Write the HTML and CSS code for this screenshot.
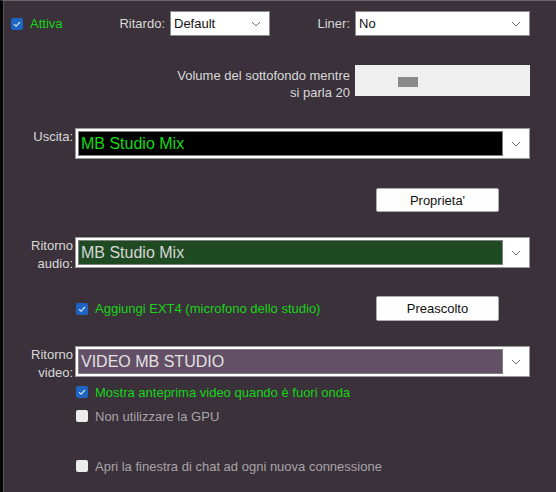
FILE: index.html
```html
<!DOCTYPE html>
<html lang="it">
<head>
    <meta charset="UTF-8">
    <title>Impostazioni uscita</title>
    <link rel="stylesheet" href="styles.css">
</head>
<body>
    <div class="panel">

        <!-- Attiva / Ritardo / Liner -->
        <div class="row row-top">
            <label class="check-cell attiva">
                <span class="box checked"><svg viewBox="0 0 12 12"><path d="M3 6.2 L5.1 8.2 L9 4"/></svg></span>
                <span class="green">Attiva</span>
            </label>
            <span class="lbl lbl-ritardo">Ritardo:</span>
            <div class="drop drop-ritardo">
                <span>Default</span>
                <svg class="chev" viewBox="0 0 10 6"><path d="M1 1 L5 5 L9 1"/></svg>
            </div>
            <span class="lbl lbl-liner">Liner:</span>
            <div class="drop drop-liner">
                <span>No</span>
                <svg class="chev" viewBox="0 0 10 6"><path d="M1 1 L5 5 L9 1"/></svg>
            </div>
        </div>

        <!-- Volume sottofondo -->
        <div class="row row-volume">
            <span class="lbl lbl-volume">Volume del sottofondo mentre<br>si parla 20</span>
            <div class="track"><span class="thumb"></span></div>
        </div>

        <!-- Uscita -->
        <div class="row row-combo row-uscita">
            <span class="lbl side">Uscita:</span>
            <div class="combo">
                <div class="field field-black">MB Studio Mix</div>
                <svg class="chev" viewBox="0 0 10 6"><path d="M1 1 L5 5 L9 1"/></svg>
            </div>
        </div>

        <div class="row row-btn row-prop">
            <button class="btn">Proprieta'</button>
        </div>

        <!-- Ritorno audio -->
        <div class="row row-combo row-audio">
            <span class="lbl side">Ritorno<br>audio:</span>
            <div class="combo">
                <div class="field field-green">MB Studio Mix</div>
                <svg class="chev" viewBox="0 0 10 6"><path d="M1 1 L5 5 L9 1"/></svg>
            </div>
        </div>

        <div class="row row-ext">
            <label class="check-cell indent ext">
                <span class="box checked"><svg viewBox="0 0 12 12"><path d="M3 6.2 L5.1 8.2 L9 4"/></svg></span>
                <span class="green">Aggiungi EXT4 (microfono dello studio)</span>
            </label>
            <button class="btn">Preascolto</button>
        </div>

        <!-- Ritorno video -->
        <div class="row row-combo row-video">
            <span class="lbl side">Ritorno<br>video:</span>
            <div class="combo">
                <div class="field field-purple">VIDEO MB STUDIO</div>
                <svg class="chev" viewBox="0 0 10 6"><path d="M1 1 L5 5 L9 1"/></svg>
            </div>
        </div>

        <label class="row check-cell indent opt opt-preview">
            <span class="box checked"><svg viewBox="0 0 12 12"><path d="M3 6.2 L5.1 8.2 L9 4"/></svg></span>
            <span class="green">Mostra anteprima video quando è fuori onda</span>
        </label>

        <label class="row check-cell indent opt opt-gpu">
            <span class="box"></span>
            <span class="off">Non utilizzare la GPU</span>
        </label>

        <label class="row check-cell indent opt opt-chat">
            <span class="box"></span>
            <span class="off">Apri la finestra di chat ad ogni nuova connessione</span>
        </label>

    </div>
</body>
</html>
```

FILE: styles.css
```css
html, body {
    margin: 0;
    height: 100%;
}

body {
    background-color: #3a313a;
    font-family: "Liberation Sans", Arial, sans-serif;
    font-size: 13px;
    color: #dcdcdc;
}

.panel {
    box-sizing: border-box;
    height: 492px;
    border-left: 3px solid #050505;
    border-top: 1px solid #6a636a;
    box-shadow: inset 1px 0 0 #5a525a;
    padding-right: 26px;
}

.row {
    display: flex;
    align-items: center;
}

/* checkboxes */
.check-cell {
    display: flex;
    align-items: center;
    gap: 7px;
    white-space: nowrap;
}

.box {
    flex: 0 0 12px;
    width: 12px;
    height: 12px;
    border-radius: 2px;
    background-color: #ececec;
    box-sizing: border-box;
}

.box.checked {
    background-color: #1d64c3;
}

.box svg {
    display: block;
    width: 12px;
    height: 12px;
}

.box svg path {
    fill: none;
    stroke: #cfe0f5;
    stroke-width: 1.2;
}

.green {
    color: #18d418;
}

.off {
    color: #a9a4a9;
}

.indent {
    padding-left: 73px;
}

/* labels */
.lbl {
    box-sizing: border-box;
    text-align: right;
    padding-right: 5px;
    color: #d9d9d9;
}

/* first row */
.row-top {
    margin-top: 10px;
    height: 25px;
}

.attiva {
    box-sizing: border-box;
    flex: 0 0 114px;
    padding-left: 8px;
}

.lbl-ritardo {
    flex: 0 0 53px;
}

.lbl-liner {
    flex: 0 0 85px;
}

.drop {
    box-sizing: border-box;
    height: 25px;
    background-color: #fff;
    border: 1px solid #8c8c8c;
    color: #111;
    display: flex;
    align-items: center;
    justify-content: space-between;
    padding: 0 8px 0 3px;
}

.drop-ritardo {
    flex: 0 0 100px;
}

.drop-liner {
    flex: 0 0 175px;
}

.chev {
    width: 10px;
    height: 6px;
    flex: 0 0 10px;
}

.chev path {
    fill: none;
    stroke: #707070;
    stroke-width: 1;
}

/* volume */
.row-volume {
    margin-top: 29px;
    height: 31px;
    align-items: flex-start;
}

.lbl-volume {
    flex: 0 0 352px;
    line-height: 17px;
    padding-top: 2px;
}

.track {
    flex: 0 0 175px;
    height: 31px;
    background-color: #efefef;
    box-sizing: border-box;
    padding: 12px 0 0 43px;
}

.thumb {
    display: block;
    width: 20px;
    height: 10px;
    background-color: #8a8a8a;
}

/* combo rows */
.row-combo {
    align-items: flex-start;
    height: 31px;
}

.side {
    flex: 0 0 72px;
    padding-right: 2px;
    line-height: 18px;
}

.combo {
    flex: 1;
    height: 31px;
    box-sizing: border-box;
    background-color: #fff;
    border: 1px solid #9a9a9a;
    padding: 2px;
    display: flex;
    align-items: center;
    gap: 8px;
}

.combo .chev {
    margin-right: 6px;
}

.field {
    flex: 1;
    align-self: stretch;
    box-sizing: border-box;
    border: 1px solid #7f7f7f;
    font-size: 16px;
    line-height: 23px;
    padding-left: 2px;
    white-space: nowrap;
}

.field-black {
    background-color: #000;
    color: #14d814;
}

.field-green {
    background-color: #204a22;
    color: #d6d6d6;
}

.field-purple {
    background-color: #634f66;
    color: #e2e2e2;
}

.row-uscita {
    margin-top: 32px;
}

.row-audio {
    margin-top: 25px;
}

.row-video {
    margin-top: 25px;
}

/* buttons */
.btn {
    box-sizing: border-box;
    width: 123px;
    height: 24px;
    background-color: #fdfdfd;
    border: 1px solid #adadad;
    border-radius: 2px;
    font-family: "Liberation Sans", Arial, sans-serif;
    font-size: 13px;
    color: #111;
    padding: 0;
}

.row-prop {
    margin-top: 29px;
    padding-left: 373px;
}

.row-ext {
    margin-top: 28px;
    height: 25px;
    justify-content: space-between;
    padding-right: 31px;
}

.row-ext .btn {
    height: 25px;
}

/* options */
.opt {
    height: 14px;
}

.opt-preview {
    margin-top: 8px;
}

.opt-gpu {
    margin-top: 10px;
}

.opt-chat {
    margin-top: 36px;
}
```
